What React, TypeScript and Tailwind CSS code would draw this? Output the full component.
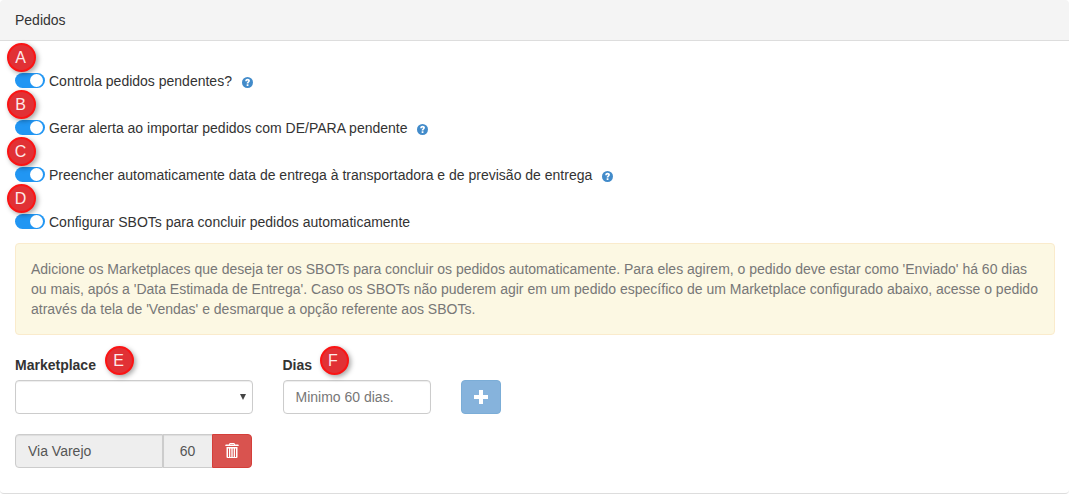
import React, { useState } from 'react';

const OPTIONS = [
  { id: 'pendentes', marker: 'A', label: 'Controla pedidos pendentes?', help: true },
  { id: 'alerta', marker: 'B', label: 'Gerar alerta ao importar pedidos com DE/PARA pendente', help: true },
  { id: 'datas', marker: 'C', label: 'Preencher automaticamente data de entrega à transportadora e de previsão de entrega', help: true },
  { id: 'sbots', marker: 'D', label: 'Configurar SBOTs para concluir pedidos automaticamente', help: false },
];

function Marker({ letter, className }: { letter: string; className: string }) {
  return (
    <span
      className={`absolute z-10 flex size-[29px] items-center justify-center rounded-full border-2 border-[#fb1414] bg-[#e13135] pr-[2px] text-[16px] leading-none text-[#fdeaea] shadow-[2px_2px_5px_rgba(0,0,0,0.35)] ${className}`}
    >
      {letter}
    </span>
  );
}

function HelpIcon() {
  return (
    <svg viewBox="0 0 20 20" className="size-[11px]" aria-hidden="true">
      <circle cx="10" cy="10" r="10" fill="#428bca" />
      <path
        d="M5.800 7.800C5.900 4.800 7.800 3.400 10.200 3.400c2.500 0 4.300 1.400 4.300 3.600 0 2.500-2.800 2.800-2.800 4.700H8.500c0-2.800 2.500-3.200 2.500-4.500 0-.7-.4-1-1-1-.7 0-1 .5-1.100 1.600zM8.500 13h3.200v3.200H8.500z"
        fill="#fff"
      />
    </svg>
  );
}

function PlusIcon() {
  return (
    <svg viewBox="0 0 14 14" className="size-[14px]" fill="currentColor" aria-hidden="true">
      <path d="M5 0h4v5h5v4H9v5H5V9H0V5h5z" />
    </svg>
  );
}

function TrashIcon() {
  return (
    <svg viewBox="0 0 14 16" className="h-[16px] w-[14px]" aria-hidden="true">
      <path
        fill="#fff"
        fillRule="evenodd"
        d="M4 1.500Q4 0 5 0h4q1 0 1 1.500h3q.7 0 .7.700V3H.3v-.8q0-.7.700-.7zM5 1.500h4V1H5zM1.500 4h11v10q0 1-1 1h-9q-1 0-1-1zM3 5.500V14h1V5.500zM5.300 5.500V14h1V5.500zM7.700 5.500V14h1V5.500zM10 5.500V14h1V5.500z"
      />
    </svg>
  );
}

export default function App() {
  const [enabled, setEnabled] = useState<Record<string, boolean>>({
    pendentes: true,
    alerta: true,
    datas: true,
    sbots: true,
  });

  const toggle = (id: string) => setEnabled((prev) => ({ ...prev, [id]: !prev[id] }));

  return (
    <section className="rounded-[4px] border-b border-[#ddd] bg-white font-['Liberation_Sans',Arial,sans-serif] text-[14px] leading-[20px] text-[#333]">
      <header className="rounded-t-[4px] border-b border-[#ddd] bg-[#f4f4f4] px-[15px] py-[10px]">
        <h3>Pedidos</h3>
      </header>

      <div className="pt-[30px] pr-[14px] pb-[25px] pl-[15px]">
        {/* Opções */}
        <div className="flex flex-col gap-[27px]">
          {OPTIONS.map((option) => (
            <div key={option.id} className="relative flex items-center">
              <Marker letter={option.marker} className="-top-[28px] -left-[8px]" />
              <input
                id={option.id}
                type="checkbox"
                checked={enabled[option.id]}
                onChange={() => toggle(option.id)}
                className="relative mb-[2px] h-[15px] w-[30px] shrink-0 cursor-pointer appearance-none rounded-full bg-[#ccc] before:absolute before:top-px before:left-px before:size-[13px] before:rounded-full before:bg-white checked:bg-[#2196f3] checked:before:left-[15px]"
              />
              <label htmlFor={option.id} className="ml-[4px]">
                {option.label}
              </label>
              {option.help && (
                <button type="button" aria-label="Ajuda" className="mt-[2px] ml-[10px]">
                  <HelpIcon />
                </button>
              )}
            </div>
          ))}
        </div>

        <div className="mt-[11px] rounded-[4px] border border-[#faebcc] bg-[#fcf8e3] p-[15px] text-[#777]">
          Adicione os Marketplaces que deseja ter os SBOTs para concluir os pedidos automaticamente. Para eles agirem, o
          pedido deve estar como 'Enviado' há 60 dias ou mais, após a 'Data Estimada de Entrega'. Caso os SBOTs não
          puderem agir em um pedido específico de um Marketplace configurado abaixo, acesse o pedido através da tela de
          'Vendas' e desmarque a opção referente aos SBOTs.
        </div>

        {/* Novo marketplace */}
        <div className="mt-[20px] grid grid-cols-12 items-end gap-x-[30px]">
          <div className="relative col-span-3">
            <label htmlFor="marketplace" className="mb-[5px] block font-bold">
              Marketplace
            </label>
            <Marker letter="E" className="-top-[9px] left-[90px]" />
            <div className="relative">
              <select
                id="marketplace"
                className="block h-[34px] w-full appearance-none rounded-[4px] border border-[#ccc] bg-white px-[12px] text-[#555] shadow-[inset_0_1px_1px_rgba(0,0,0,0.075)]"
              >
                <option value=""></option>
                <option value="via-varejo">Via Varejo</option>
              </select>
              <svg
                viewBox="0 0 6 6"
                className="pointer-events-none absolute top-[14px] right-[7px] size-[6px]"
                aria-hidden="true"
              >
                <path d="M0 0h6L3 6z" fill="#444" />
              </svg>
            </div>
          </div>

          <div className="relative col-span-2">
            <label htmlFor="dias" className="mb-[5px] block font-bold">
              Dias
            </label>
            <Marker letter="F" className="-top-[9px] left-[37px]" />
            <input
              id="dias"
              type="text"
              placeholder="Minimo 60 dias."
              className="block h-[34px] w-full rounded-[4px] border border-[#ccc] px-[12px] text-[#555] shadow-[inset_0_1px_1px_rgba(0,0,0,0.075)] placeholder:text-[#777]"
            />
          </div>

          <button
            type="button"
            aria-label="Adicionar"
            className="flex h-[34px] w-[40px] items-center justify-center rounded-[4px] border border-[#7badd7] bg-[#86b3dc] text-white"
          >
            <PlusIcon />
          </button>
        </div>

        {/* Marketplaces configurados */}
        <div className="mt-[20px] grid grid-cols-12 gap-x-[30px]">
          <div className="col-span-3 flex pr-px">
            <input
              type="text"
              aria-label="Marketplace configurado"
              value="Via Varejo"
              readOnly
              className="h-[34px] min-w-0 flex-1 rounded-l-[4px] border border-[#ccc] bg-[#eee] px-[12px] text-[#555] shadow-[inset_0_1px_1px_rgba(0,0,0,0.075)]"
            />
            <input
              type="text"
              aria-label="Dias configurados"
              value="60"
              readOnly
              className="h-[34px] w-[49px] border-y border-l border-[#ccc] bg-[#eee] text-center text-[#555] shadow-[inset_0_1px_1px_rgba(0,0,0,0.075)]"
            />
            <button
              type="button"
              aria-label="Remover"
              className="flex h-[34px] w-[40px] items-center justify-center rounded-r-[4px] border border-[#d43f3a] bg-[#d9534f]"
            >
              <TrashIcon />
            </button>
          </div>
        </div>
      </div>
    </section>
  );
}
